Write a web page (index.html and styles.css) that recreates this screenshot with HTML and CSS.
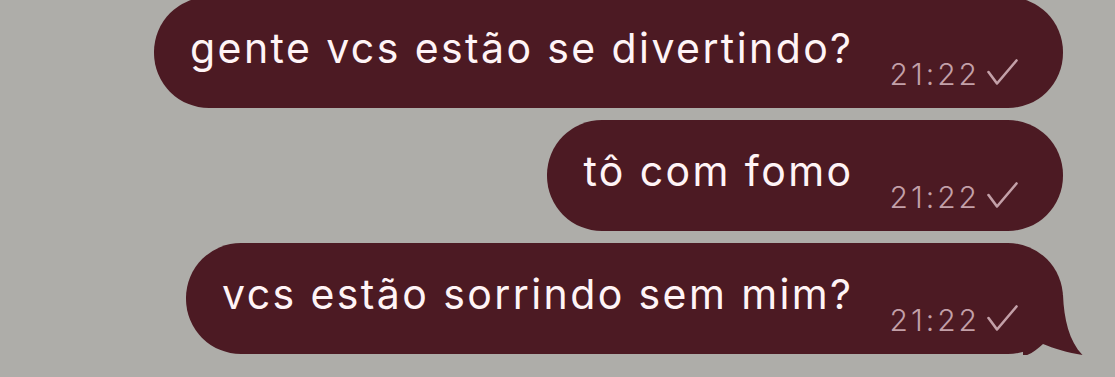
FILE: index.html
```html
<!DOCTYPE html>
<html lang="pt">
<head>
<meta charset="utf-8">
<link rel="stylesheet" href="styles.css">
</head>
<body>
<div class="chat">
  <div class="bubble">
    <span class="text">gente vcs estão se divertindo?</span>
    <span class="meta"><span class="time">21:22</span><svg class="check" width="32" height="27" viewBox="0 0 32 27"><path d="M2.5 13 L11 24.5 L30.5 1.5" fill="none" stroke="currentColor" stroke-width="2.6" stroke-linecap="round" stroke-linejoin="round"/></svg></span>
  </div>
  <div class="bubble">
    <span class="text">tô com fomo</span>
    <span class="meta"><span class="time">21:22</span><svg class="check" width="32" height="27" viewBox="0 0 32 27"><path d="M2.5 13 L11 24.5 L30.5 1.5" fill="none" stroke="currentColor" stroke-width="2.6" stroke-linecap="round" stroke-linejoin="round"/></svg></span>
  </div>
  <div class="bubble tailed">
    <span class="text">vcs estão sorrindo sem mim?</span>
    <span class="meta"><span class="time">21:22</span><svg class="check" width="32" height="27" viewBox="0 0 32 27"><path d="M2.5 13 L11 24.5 L30.5 1.5" fill="none" stroke="currentColor" stroke-width="2.6" stroke-linecap="round" stroke-linejoin="round"/></svg></span>
    <svg class="tail" width="60" height="60" viewBox="0 0 60 60"><path d="M0 61 C8 60 14 54 20 49 C30 53 45 58 59.5 60 C46 46 41 24 40 0 L0 0 Z" fill="#4c1a23"/></svg>
  </div>
</div>
</body>
</html>
```

FILE: styles.css
```css
html, body {
  margin: 0;
  padding: 0;
}
body {
  background: #aeada9;
  width: 1115px;
  height: 377px;
  overflow: hidden;
  font-family: Inter, "Noto Sans", sans-serif;
}
.chat {
  display: flex;
  flex-direction: column;
  align-items: flex-end;
  gap: 12.5px;
  margin-top: -3px;
  padding-right: 52px;
}
.bubble {
  position: relative;
  display: flex;
  align-items: flex-start;
  box-sizing: border-box;
  height: 110.5px;
  border-radius: 55px;
  background: #4c1a23;
  padding-left: 36px;
  padding-right: 45px;
}
.text {
  margin-top: 31px;
  font-size: 41px;
  line-height: 1;
  letter-spacing: 2.4px;
  color: #fff4f6;
  white-space: nowrap;
}
.meta {
  display: flex;
  align-items: flex-end;
  margin-top: 62px;
  margin-left: 36px;
  color: #c3a0a8;
}
.time {
  font-size: 30px;
  line-height: 1;
  font-weight: 300;
  letter-spacing: 3px;
}
.check {
  display: block;
  margin-left: 6px;
  margin-bottom: 3px;
}
.tail {
  position: absolute;
  right: -20px;
  bottom: -1px;
}
```
